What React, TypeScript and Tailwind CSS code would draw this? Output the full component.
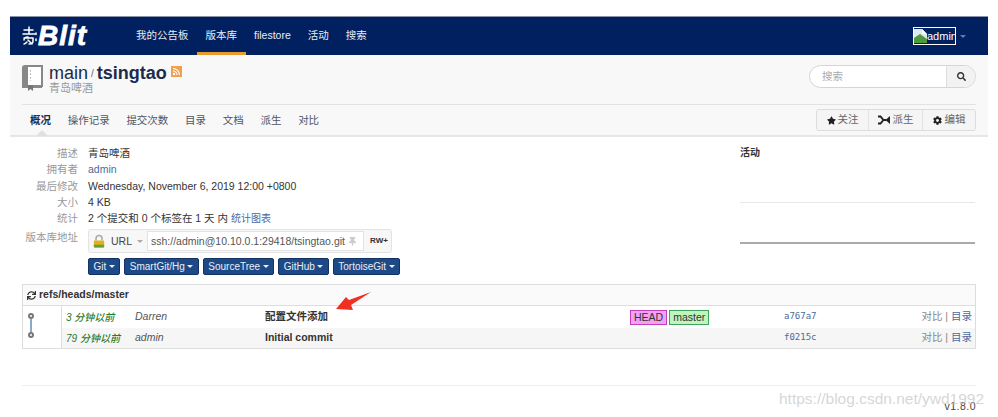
import { FaStar, FaCog, FaSearch, FaSync, FaThumbtack } from 'react-icons/fa';

const navItems = ['我的公告板', '版本库', 'filestore', '活动', '搜索'];
const tabs = ['概况', '操作记录', '提交次数', '目录', '文档', '派生', '对比'];
const infoRows = [
  { label: '描述', value: <span>青岛啤酒</span> },
  { label: '拥有者', value: <span className="text-[#4a6a9c]">admin</span> },
  { label: '最后修改', value: <span>Wednesday, November 6, 2019 12:00 +0800</span> },
  { label: '大小', value: <span>4 KB</span> },
  {
    label: '统计',
    value: (
      <span>
        2 个提交和 0 个标签在 1 天 内 <span className="text-[#4a6a9c] text-[10px]">统计图表</span>
      </span>
    ),
  },
];
const cloneButtons = ['Git', 'SmartGit/Hg', 'SourceTree', 'GitHub', 'TortoiseGit'];
const commits = [
  { age: '3 分钟以前', author: 'Darren', message: '配置文件添加', hash: 'a767a7', refs: true },
  { age: '79 分钟以前', author: 'admin', message: 'Initial commit', hash: 'f0215c', refs: false },
];

function Caret({ className }: { className: string }) {
  return <span className={`inline-block w-0 h-0 border-x-[3px] border-x-transparent border-t-[3px] ${className}`} />;
}

function RepoIcon() {
  return (
    <svg width="21" height="26" viewBox="0 0 21 26" className="shrink-0">
      <path d="M1 3a2 2 0 0 1 2-2h17v20H3a2 2 0 0 0-2 2z" fill="#fff" stroke="#888" strokeWidth="2" />
      <path d="M1 3a2 2 0 0 1 2-2h3v20H3a2 2 0 0 0-2 1z" fill="#888" />
      <path d="M1 22h19" stroke="#888" strokeWidth="2" />
      <path d="M6 20h5v6l-2.500-2-2.500 2z" fill="#777" />
      <path d="M8.500 5v11" stroke="#aaa" strokeWidth="1" strokeDasharray="1.500 2" />
    </svg>
  );
}

function BrokenImage() {
  return (
    <svg width="13" height="14" viewBox="0 0 13 14" className="shrink-0">
      <path d="M0 0h8l5 5v9H0z" fill="#dfe8f2" />
      <path d="M0 9l6-4 7 5v4H0z" fill="#4f9a3d" />
      <path d="M8 0v5h5z" fill="#fff" />
    </svg>
  );
}

function ForkIcon() {
  return (
    <svg width="12" height="10" viewBox="0 0 12 10" className="shrink-0">
      <path d="M0 1.500h2.500L5.500 5h3M0 8.500h2.500L5 5.500" fill="none" stroke="#222" strokeWidth="1.900" />
      <path d="M12 1v8L7.500 5z" fill="#222" />
    </svg>
  );
}

function Logo() {
  return (
    <div className="flex items-center text-white w-[65px] shrink-0">
      <svg width="16" height="22" viewBox="0 0 16 22" className="shrink-0">
        <g fill="none" stroke="#fff" strokeWidth="1.500" strokeLinecap="round">
          <path d="M7 2v7M2 5h9M1 9h12" />
          <path d="M6 12c-2 0-4 1-4 3M2 13h9M11 13v3c0 2-2 3-4 3M6 15c1 1 2 2 4 4M2 19c1 0 2-1 3-2" />
          <path d="M14 8v1.500M14 14v1.500" />
        </g>
      </svg>
      <span className="text-[28px] leading-none font-bold italic font-['Liberation_Sans',sans-serif] tracking-[1px] [-webkit-text-stroke:0.8px_white]">Blit</span>
    </div>
  );
}

export default function App() {
  return (
    <div className="relative w-[998px] h-[417px] overflow-hidden bg-white px-[10px] pt-[16px] text-[#333] text-[11px] font-['Liberation_Sans','Noto_Sans_CJK_SC',sans-serif]">
      {/* Top nav */}
      <div className="h-[39px] bg-[#002060] border-t border-[#8a93a8] flex items-center pl-[12px] pr-[22px]">
        <Logo />
        <div className="flex ml-[40.500px] h-full">
          {navItems.map((item, i) => (
            <div
              key={item}
              className={`px-[8.500px] flex items-center text-[10.500px] text-[#e8ecf4] border-b-[3px] pt-[3px] ${
                i === 1 ? 'border-[#e89a2c]' : 'border-transparent'
              }`}
            >
              {item}
            </div>
          ))}
        </div>
        <div className="ml-auto flex items-center gap-[4px]">
          <div className="flex items-center h-[18px] w-[43px] border border-white overflow-hidden text-white text-[11px]">
            <BrokenImage />
            <span>admin</span>
          </div>
          <Caret className="border-t-[#6a7a9a]" />
        </div>
      </div>

      {/* Repo header */}
      <div className="bg-[#f8f8f8] border-b-2 border-[#e6e6e6] h-[82px] px-[12px]">
        <div className="h-[50px] border-b border-[#e2e2e2] flex items-start pt-[10px]">
          <RepoIcon />
          <div className="ml-[6px] -mt-[1px]">
            <div className="flex items-center h-[17px] text-[18px] leading-none text-[#1c2b4a]">
              <span>main</span>
              <span className="text-[10px] text-[#666] mx-[3px] mt-[3px]">/</span>
              <span className="font-bold">tsingtao</span>
              <svg width="11" height="11" viewBox="0 0 11 11" className="ml-[4px] -mt-[3px]">
                <rect width="11" height="11" fill="#f0a050" />
                <circle cx="3" cy="8" r="1.200" fill="#fff" />
                <path d="M2 5a4 4 0 0 1 4 4M2 2.500a6.500 6.500 0 0 1 6.500 6.500" fill="none" stroke="#fff" strokeWidth="1.200" />
              </svg>
            </div>
            <div className="text-[11px] leading-[13px] mt-[1px] text-[#999]">青岛啤酒</div>
          </div>
          <div className="ml-auto flex h-[23px] w-[167px] border border-[#d5d5d5] rounded-full overflow-hidden bg-white">
            <div className="flex-1 pl-[12px] text-[#aaa] text-[10.500px] leading-[21px]">搜索</div>
            <div className="w-[29px] bg-[#f2f2f2] border-l border-[#ddd] flex items-center justify-center">
              <FaSearch size={9} className="text-[#333]" />
            </div>
          </div>
        </div>
        <div className="flex items-start">
          <div className="relative flex pl-[8px] pt-[6px] gap-[16.700px] text-[10.500px] leading-[18px] text-[#4d5566]">
            {tabs.map((tab, i) => (
              <span key={tab} className={i === 0 ? 'font-bold text-[#1c2b4a]' : ''}>
                {tab}
              </span>
            ))}
            <span className="absolute left-[14px] bottom-[-7px] w-0 h-0 border-x-[6px] border-x-transparent border-b-[6px] border-b-[#e0e0e0]" />
          </div>
          <div className="ml-auto mt-[4px] flex h-[22px] w-[160px] border border-[#ddd] rounded-[3px] bg-[#f5f5f5] text-[10.500px] text-[#666]">
            <div className="w-[52px] flex items-center justify-center gap-[2px] border-r border-[#e2e2e2]">
              <FaStar size={9} className="text-[#222]" />
              关注
            </div>
            <div className="w-[54px] flex items-center justify-center gap-[3px] border-r border-[#e2e2e2]">
              <ForkIcon />
              派生
            </div>
            <div className="flex-1 flex items-center justify-center gap-[3px]">
              <FaCog size={9} className="text-[#222]" />
              编辑
            </div>
          </div>
        </div>
      </div>

      {/* Summary */}
      <div className="flex h-[147px] px-[12px] pt-[8px]">
        <div className="w-[718px]">
          {infoRows.map((row) => (
            <div key={row.label} className="flex h-[16.300px] leading-[16px] text-[10.500px]">
              <div className="w-[56px] text-right text-[#999]">{row.label}</div>
              <div className="ml-[10px] text-[#333]">{row.value}</div>
            </div>
          ))}
          <div className="flex mt-[3px]">
            <div className="w-[56px] text-[#999] whitespace-nowrap leading-[16px] text-[10.500px] flex justify-end">版本库地址</div>
            <div className="ml-[10px]">
              <div className="flex items-center w-[304px] h-[24px] border border-[#e3e3e3] rounded-[3px] bg-[#f7f7f7] px-[3px]">
                <svg width="12" height="14" viewBox="0 0 14 15" className="shrink-0 ml-[1px]">
                  <path d="M3.500 7V4.500a3.500 3.500 0 0 1 7 0V7" fill="none" stroke="#a8a8a8" strokeWidth="1.800" />
                  <rect x="1" y="7" width="12" height="8" rx="1" fill="#e0b020" />
                  <path d="M1 12h12v2a1 1 0 0 1-1 1H2a1 1 0 0 1-1-1z" fill="#6aa030" />
                </svg>
                <span className="ml-[6px] text-[10.500px] text-[#444]">URL</span>
                <Caret className="ml-[5px] border-t-[#aaa]" />
                <span className="ml-[4px] flex items-center w-[217px] h-[20px] bg-white border border-[#e3e3e3] pl-[3px] text-[10.500px] text-[#555] whitespace-nowrap">
                  ssh://admin@10.10.0.1:29418/tsingtao.git
                  <FaThumbtack size={9} className="ml-[3px] text-[#ccc] shrink-0" />
                </span>
                <span className="ml-[6px] text-[8px] font-bold text-[#333]">RW+</span>
              </div>
              <div className="flex gap-[4px] mt-[5px]">
                {cloneButtons.map((b) => (
                  <div
                    key={b}
                    className="flex items-center gap-[2.500px] h-[17px] px-[4.500px] rounded-[2px] bg-[#1d4a86] border border-[#123263] text-[10px] text-[#e8eef8] whitespace-nowrap"
                  >
                    {b}
                    <Caret className="border-t-[#e8eef8]" />
                  </div>
                ))}
              </div>
            </div>
          </div>
        </div>
        <div className="w-[235px]">
          <div className="font-bold text-[10px] leading-[16px] text-[#333]">活动</div>
          <div className="h-[42px] border-b border-[#e8e8e8]" />
          <div className="h-[41px] border-b-2 border-[#aaa]" />
        </div>
      </div>

      {/* Commit log */}
      <div className="mx-[12px] h-[65px] border border-[#ddd]">
        <div className="h-[21px] bg-[#fafafa] border-b border-[#ddd] flex items-center pl-[4px] gap-[3px] font-bold text-[10.500px] text-[#333]">
          <FaSync size={9} />
          refs/heads/master
        </div>
        <div className="flex h-[42px]">
          <div className="w-[39px] border-r border-[#ddd] flex flex-col items-start pl-[5px] pt-[7px] shrink-0">
            <span className="w-[6px] h-[6px] rounded-full border-2 border-[#777]" />
            <span className="w-[2px] h-[13px] ml-[2px] bg-[#8aa8c8]" />
            <span className="w-[6px] h-[6px] rounded-full border-2 border-[#777]" />
          </div>
          <div className="flex-1 flex flex-col whitespace-nowrap">
            {commits.map((c, i) => (
              <div key={c.hash} className={`flex items-center ${i === 1 ? 'h-[20px] bg-[#f6f6f6]' : 'h-[22px]'}`}>
                <span className="w-[69px] ml-[4px] italic font-medium text-[#2a7a2a] text-[10px]">{c.age}</span>
                <span className="w-[130px] italic text-[#555] text-[10.500px]">{c.author}</span>
                <span className="w-[365px] font-bold text-[#333] text-[10.500px]">{c.message}</span>
                <span className="w-[154px] flex gap-[2px]">
                  {c.refs && (
                    <>
                      <span className="h-[15px] leading-[13px] px-[3px] bg-[#f2a0f2] border border-[#c040c0] text-[10.500px] text-[#333]">HEAD</span>
                      <span className="h-[15px] leading-[13px] px-[3px] bg-[#bdf5bd] border border-[#40a060] text-[10.500px] text-[#333]">master</span>
                    </>
                  )}
                </span>
                <span className="font-['DejaVu_Sans_Mono',monospace] text-[9px] text-[#4a6a9c]">{c.hash}</span>
                <span className="text-[10.500px] text-[#888] ml-auto mr-[3px]">
                  对比 | <span className="text-[#4a6a9c]">目录</span>
                </span>
              </div>
            ))}
          </div>
        </div>
      </div>

      {/* Footer */}
      <div className="mx-[12px] mt-[36px] border-t border-[#eee] flex justify-end pt-[13px] text-[10.500px] text-[#444] tracking-[0.5px] leading-[14px]">
        v1.8.0
      </div>

      {/* Red annotation arrow */}
      <svg width="38" height="20" viewBox="0 0 38 20" className="absolute left-[335px] top-[291px]">
        <path d="M36 1L16 14l2 5L1 18 11 6l3 3z" fill="#f03020" />
      </svg>

      {/* Watermark */}
      <div className="absolute left-[779px] top-[389px] text-[15.500px] leading-[20px] text-[#c4c4c4]/70 whitespace-nowrap">
        https://blog.csdn.net/ywd1992
      </div>
    </div>
  );
}
